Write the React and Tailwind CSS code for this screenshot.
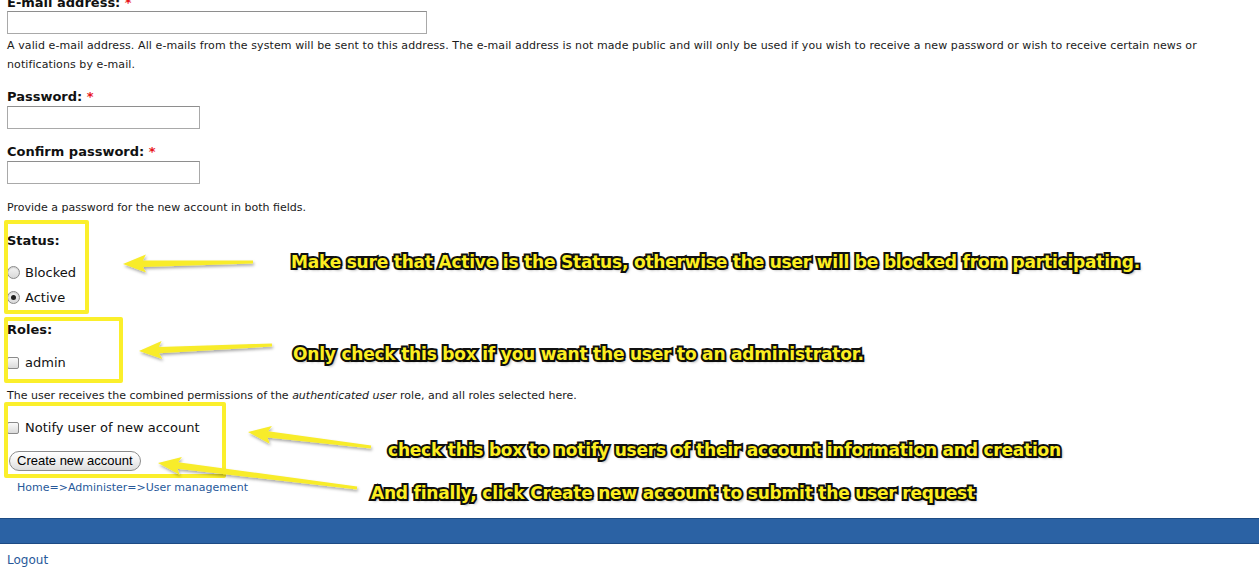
import React from "react";

const ANNOTATIONS = [
  { x: 291, y: 262, text: "Make sure that Active is the Status, otherwise the user will be blocked from participating." },
  { x: 293, y: 354, text: "Only check this box if you want the user to an administrator." },
  { x: 388, y: 450, text: "check this box to notify users of their account information and creation" },
  { x: 371, y: 493, text: "And finally, click Create new account to submit the user request" },
];

// tail -> tip, in page pixels
const ARROWS = [
  { from: [253, 262], to: [123, 264] },
  { from: [272, 345], to: [139, 351] },
  { from: [371, 447], to: [248, 432] },
  { from: [357, 488], to: [158, 463] },
];

function arrowPoints([x1, y1], [x2, y2]) {
  const dx = x2 - x1;
  const dy = y2 - y1;
  const len = Math.hypot(dx, dy);
  const ux = dx / len;
  const uy = dy / len;
  const nx = -uy;
  const ny = ux;
  const head = 20;
  const headW = 9;
  const shaftTail = 1.5;
  const shaftHead = 3.2;
  const bx = x2 - ux * head;
  const by = y2 - uy * head;
  const pts = [
    [x1 + nx * shaftTail, y1 + ny * shaftTail],
    [bx + nx * shaftHead, by + ny * shaftHead],
    [bx + nx * headW - ux * 3, by + ny * headW - uy * 3],
    [x2, y2],
    [bx - nx * headW - ux * 3, by - ny * headW - uy * 3],
    [bx - nx * shaftHead, by - ny * shaftHead],
    [x1 - nx * shaftTail, y1 - ny * shaftTail],
  ];
  return pts.map((p) => p.map((v) => v.toFixed(1)).join(",")).join(" ");
}

function Required() {
  return <span className="text-[#e8141b]">*</span>;
}

function Radio({ checked }) {
  return (
    <span className="inline-flex h-[13px] w-[13px] shrink-0 items-center justify-center rounded-full border border-[#8a8a8a] bg-gradient-to-b from-[#f4f4f4] to-[#d9d9d9] shadow-[inset_0_1px_1px_rgba(0,0,0,0.15)]">
      {checked && <span className="h-[5px] w-[5px] rounded-full bg-[#222]" />}
    </span>
  );
}

function Checkbox() {
  return (
    <span className="inline-block h-[12px] w-[12px] shrink-0 rounded-[2px] border border-[#8a8a8a] bg-gradient-to-b from-[#fafafa] to-[#dadada]" />
  );
}

export default function App() {
  return (
    <div className="relative h-[570px] w-[1259px] overflow-hidden bg-white font-['DejaVu_Sans',Verdana,sans-serif] text-[#111]">
      <div className="-mt-[6px] pl-[7px]">
        {/* E-mail */}
        <div className="text-[13px] font-bold leading-[17px]">
          E-mail address: <Required />
        </div>
        <div className="h-[23px] w-[420px] border border-[#a9a9a9] border-t-[#8e8e8e] bg-white" />
        <p className="mt-[2px] pr-[50px] text-[11px] leading-[19px] tracking-[0.09px] text-[#1a1a1a]">
          A valid e-mail address. All e-mails from the system will be sent to this address. The e-mail address is not made public and will only be used if you wish to receive a new password or wish to receive certain news or notifications by e-mail.
        </p>

        {/* Password */}
        <div className="mt-[14px] text-[13px] font-bold leading-[18px]">
          Password: <Required />
        </div>
        <div className="h-[23px] w-[193px] border border-[#a9a9a9] border-t-[#8e8e8e] bg-white" />

        <div className="mt-[14px] text-[13px] font-bold leading-[18px]">
          Confirm password: <Required />
        </div>
        <div className="h-[23px] w-[193px] border border-[#a9a9a9] border-t-[#8e8e8e] bg-white" />
        <p className="mt-[14px] text-[11px] leading-[19px] text-[#1a1a1a]">
          Provide a password for the new account in both fields.
        </p>

        {/* Status */}
        <div className="mt-[15px] text-[13px] font-bold leading-[18px]">Status:</div>
        <div className="mt-[10px] flex h-[25px] items-center gap-[5px] text-[13px]">
          <Radio />
          <span>Blocked</span>
        </div>
        <div className="flex h-[25px] items-center gap-[5px] text-[13px]">
          <Radio checked />
          <span>Active</span>
        </div>

        {/* Roles */}
        <div className="mt-[11px] text-[13px] font-bold leading-[18px]">Roles:</div>
        <div className="mt-[11px] flex h-[25px] items-center gap-[6px] text-[13px]">
          <Checkbox />
          <span>admin</span>
        </div>
        <p className="mt-[11px] text-[11px] leading-[19px] text-[#1a1a1a]">
          The user receives the combined permissions of the <em>authenticated user</em> role, and all roles selected here.
        </p>

        {/* Notify */}
        <div className="mt-[10px] flex h-[25px] items-center gap-[6px] text-[13px]">
          <Checkbox />
          <span>Notify user of new account</span>
        </div>
        <button className="mt-[11px] ml-[2px] h-[20px] rounded-full border border-[#8c8c8c] bg-gradient-to-b from-white via-[#f1f1f1] to-[#dcdcdc] px-[7px] font-['Liberation_Sans',Arial,sans-serif] text-[13px] leading-[18px] text-black">
          Create new account
        </button>

        <div className="mt-[6px] pl-[10px] text-[11px] leading-[19px] text-[#27599a]">
          Home=&gt;Administer=&gt;User management
        </div>
      </div>

      <div className="mt-[21px] h-[26px] border-y border-[#1d4b84] bg-[#2b62a4]" />

      <div className="mt-[7px] pl-[7px] text-[12px] leading-[18px] text-[#27599a]">Logout</div>

      {/* Annotation overlay */}
      <div className="absolute left-[4px] top-[220px] h-[94px] w-[85px] rounded-[2px] border-4 border-[#fbef2b]" />
      <div className="absolute left-[4px] top-[317px] h-[66px] w-[119px] rounded-[2px] border-4 border-[#fbef2b]" />
      <div className="absolute left-[4px] top-[402px] h-[76px] w-[222px] rounded-[2px] border-4 border-[#fbef2b]" />

      <svg className="pointer-events-none absolute left-0 top-0" width="1259" height="570">
        <defs>
          <filter id="sh" x="-20%" y="-50%" width="140%" height="200%">
            <feDropShadow dx="1" dy="2" stdDeviation="1.5" floodColor="#000" floodOpacity="0.35" />
          </filter>
        </defs>
        {ARROWS.map((a, i) => (
          <polygon key={i} points={arrowPoints(a.from, a.to)} fill="#f8ec2c" filter="url(#sh)" />
        ))}
      </svg>

      {ANNOTATIONS.map((a, i) => (
        <div
          key={i}
          className="absolute whitespace-nowrap font-['DejaVu_Sans',Verdana,sans-serif] text-[17px] font-bold leading-[20px] tracking-[-0.2px] text-[#fcee21] [-webkit-text-stroke:4px_#111] [paint-order:stroke_fill] [text-shadow:2px_2px_3px_rgba(0,0,0,0.45)]"
          style={{ left: a.x, top: a.y - 10 }}
        >
          {a.text}
        </div>
      ))}
    </div>
  );
}
